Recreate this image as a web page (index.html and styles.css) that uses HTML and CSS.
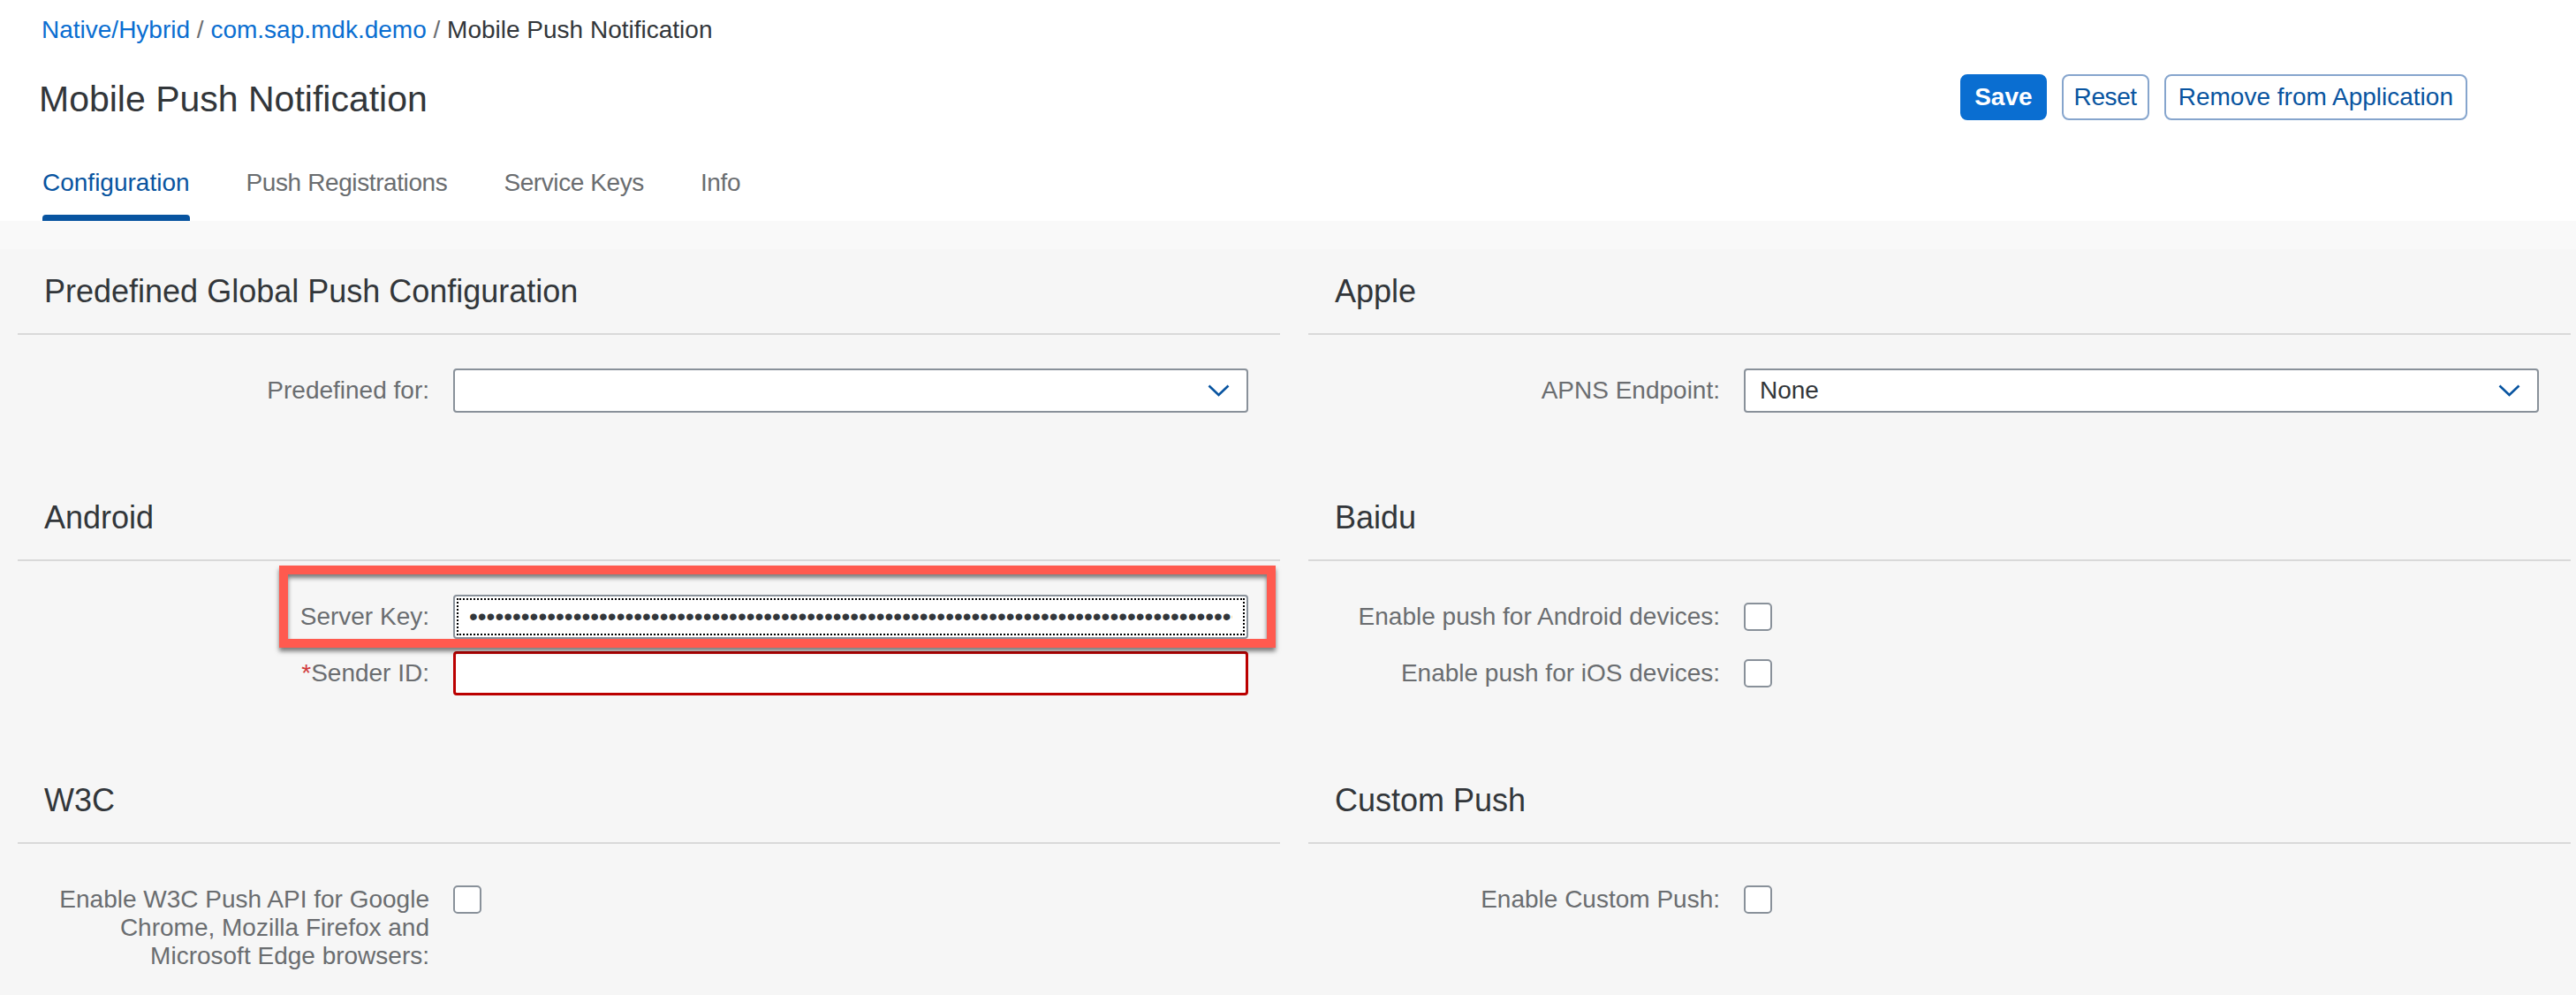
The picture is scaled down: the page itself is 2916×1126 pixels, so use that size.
FILE: index.html
```html
<!DOCTYPE html>
<html lang="en">
<head>
<meta charset="utf-8">
<title>Mobile Push Notification</title>
<link rel="stylesheet" href="styles.css">
</head>
<body>
<header class="page-header">
  <nav class="breadcrumb">
    <a href="#">Native/Hybrid</a><span class="sep"> / </span><a href="#">com.sap.mdk.demo</a><span class="sep"> / </span><span class="current">Mobile Push Notification</span>
  </nav>
  <div class="title-row">
    <h1 class="title">Mobile Push Notification</h1>
    <div class="actions">
      <button class="btn btn-emph">Save</button>
      <button class="btn btn-compact">Reset</button>
      <button class="btn">Remove from Application</button>
    </div>
  </div>
  <div class="tabs">
    <div class="tab active">Configuration</div>
    <div class="tab">Push Registrations</div>
    <div class="tab">Service Keys</div>
    <div class="tab">Info</div>
  </div>
</header>
<main class="content">
  <div class="grid">
    <section class="panel">
      <h2 class="panel-title">Predefined Global Push Configuration</h2>
      <div class="form">
        <div class="row">
          <label class="lbl">Predefined for:</label>
          <div class="fld">
            <div class="select"><span class="select-text"></span>
              <svg class="chev" width="25" height="14" viewBox="0 0 25 14"><path d="M1.5 1.5 L12.5 12 L23.5 1.5" fill="none" stroke="#0854a0" stroke-width="2.6"/></svg>
            </div>
          </div>
        </div>
      </div>
    </section>
    <section class="panel">
      <h2 class="panel-title">Apple</h2>
      <div class="form">
        <div class="row">
          <label class="lbl">APNS Endpoint:</label>
          <div class="fld">
            <div class="select"><span class="select-text">None</span>
              <svg class="chev" width="25" height="14" viewBox="0 0 25 14"><path d="M1.5 1.5 L12.5 12 L23.5 1.5" fill="none" stroke="#0854a0" stroke-width="2.6"/></svg>
            </div>
          </div>
        </div>
      </div>
    </section>
    <section class="panel panel-annotated">
      <h2 class="panel-title">Android</h2>
      <div class="form">
        <div class="row">
          <label class="lbl">Server Key:</label>
          <div class="fld">
            <input class="input input-focus" type="text" readonly value="••••••••••••••••••••••••••••••••••••••••••••••••••••••••••••••••••••••••••••••••••••••••••••••••••••••••••••">
          </div>
        </div>
        <div class="row">
          <label class="lbl"><span class="req">*</span>Sender ID:</label>
          <div class="fld">
            <input class="input input-error" type="text" readonly value="">
          </div>
        </div>
      </div>
      <div class="annot"></div>
    </section>
    <section class="panel">
      <h2 class="panel-title">Baidu</h2>
      <div class="form">
        <div class="row">
          <label class="lbl">Enable push for Android devices:</label>
          <div class="fld"><input class="cb" type="checkbox"></div>
        </div>
        <div class="row">
          <label class="lbl">Enable push for iOS devices:</label>
          <div class="fld"><input class="cb" type="checkbox"></div>
        </div>
      </div>
    </section>
    <section class="panel">
      <h2 class="panel-title">W3C</h2>
      <div class="form">
        <div class="row">
          <label class="lbl">Enable W3C Push API for Google Chrome, Mozilla Firefox and Microsoft Edge browsers:</label>
          <div class="fld"><input class="cb" type="checkbox"></div>
        </div>
      </div>
    </section>
    <section class="panel">
      <h2 class="panel-title">Custom Push</h2>
      <div class="form">
        <div class="row">
          <label class="lbl">Enable Custom Push:</label>
          <div class="fld"><input class="cb" type="checkbox"></div>
        </div>
      </div>
    </section>
  </div>
</main>
</body>
</html>
```

FILE: styles.css
```css
html, body {
  margin: 0;
  padding: 0;
  overflow: hidden;
}

body {
  font-family: "Liberation Sans", Arial, sans-serif;
  background: #ffffff;
  color: #32363a;
}

.page-header {
  background: #ffffff;
}

.breadcrumb {
  padding: 14px 0 0 47px;
  font-size: 28px;
  line-height: 40px;
  color: #32363a;
}

.breadcrumb a {
  color: #0a6ed1;
  text-decoration: none;
}

.breadcrumb .sep {
  color: #6a6d70;
}

.title-row {
  display: flex;
  justify-content: space-between;
  align-items: flex-start;
  height: 52px;
  margin-top: 30px;
  padding: 0 123px 0 44px;
}

.title {
  margin: 0;
  padding-top: 4px;
  font-size: 41px;
  line-height: 48px;
  font-weight: normal;
  color: #32363a;
}

.actions {
  display: flex;
  gap: 17px;
}

.btn {
  height: 52px;
  box-sizing: border-box;
  padding: 0 14px;
  border: 2px solid #86a5cd;
  border-radius: 8px;
  background: #ffffff;
  color: #0854a0;
  font-family: "Liberation Sans", Arial, sans-serif;
  font-size: 28px;
  line-height: 48px;
}

.btn-compact {
  padding: 0 12px;
  letter-spacing: -0.4px;
}

.btn-emph {
  background: #0a6ed1;
  border-color: #0a6ed1;
  color: #ffffff;
  font-weight: bold;
}

.tabs {
  display: flex;
  gap: 64px;
  margin-top: 31px;
  padding-left: 48px;
}

.tab {
  position: relative;
  padding: 20px 0 23px;
  font-size: 28px;
  line-height: 40px;
  color: #6a6d70;
  letter-spacing: -0.4px;
}

.tab.active {
  color: #0854a0;
  letter-spacing: 0;
}

.tab.active::after {
  content: "";
  position: absolute;
  left: 0;
  right: 0;
  bottom: 0;
  height: 7px;
  background: #0854a0;
  border-radius: 4px 4px 0 0;
}

.content {
  background: linear-gradient(#f9f9f9 0, #f9f9f9 32px, #f6f6f6 32px);
  min-height: 876px;
}

.grid {
  display: grid;
  grid-template-columns: 1fr 1fr;
  column-gap: 32px;
  padding: 0 6px 0 20px;
}

.panel {
  position: relative;
}

.panel-title {
  margin: 0;
  padding: 58px 30px 25px;
  font-size: 36px;
  line-height: 44px;
  font-weight: normal;
  color: #32363a;
  border-bottom: 2px solid #d9d9d9;
}

.form {
  padding: 31px 0 32px;
}

.row {
  display: grid;
  grid-template-columns: 476px 1fr;
}

.lbl {
  padding: 16px 10px 16px 16px;
  text-align: right;
  font-size: 28px;
  line-height: 32px;
  color: #6a6d70;
}

.req {
  color: #d13b3b;
}

.fld {
  height: 64px;
  display: flex;
  align-items: center;
  padding: 0 36px 0 17px;
}

.select {
  flex: 1;
  height: 50px;
  box-sizing: border-box;
  display: flex;
  align-items: center;
  justify-content: space-between;
  padding: 0 19px 0 16px;
  border: 2px solid #89919a;
  border-radius: 4px;
  background: #ffffff;
  font-size: 28px;
  color: #32363a;
}

.chev {
  display: block;
}

.input {
  flex: 1;
  width: 100%;
  height: 50px;
  box-sizing: border-box;
  margin: 0;
  padding: 0 16px;
  border: 2px solid #89919a;
  border-radius: 4px;
  background: #ffffff;
  font-family: "Liberation Sans", Arial, sans-serif;
  font-size: 28px;
  color: #32363a;
}

.input-focus {
  outline: 2px dotted #000000;
  outline-offset: -6px;
}

.input-error {
  border: 3px solid #bb0000;
  outline: none;
}

.cb {
  appearance: none;
  -webkit-appearance: none;
  width: 32px;
  height: 32px;
  margin: 0;
  box-sizing: border-box;
  border: 2px solid #89919a;
  border-radius: 5px;
  background: #ffffff;
}

.annot {
  position: absolute;
  left: 296px;
  top: 134px;
  width: 1128px;
  height: 93px;
  box-sizing: border-box;
  border: 10px solid #ff5a4f;
  box-shadow: 0 4px 5px rgba(0, 0, 0, 0.5), inset 0 4px 5px rgba(0, 0, 0, 0.5);
  pointer-events: none;
}
```
